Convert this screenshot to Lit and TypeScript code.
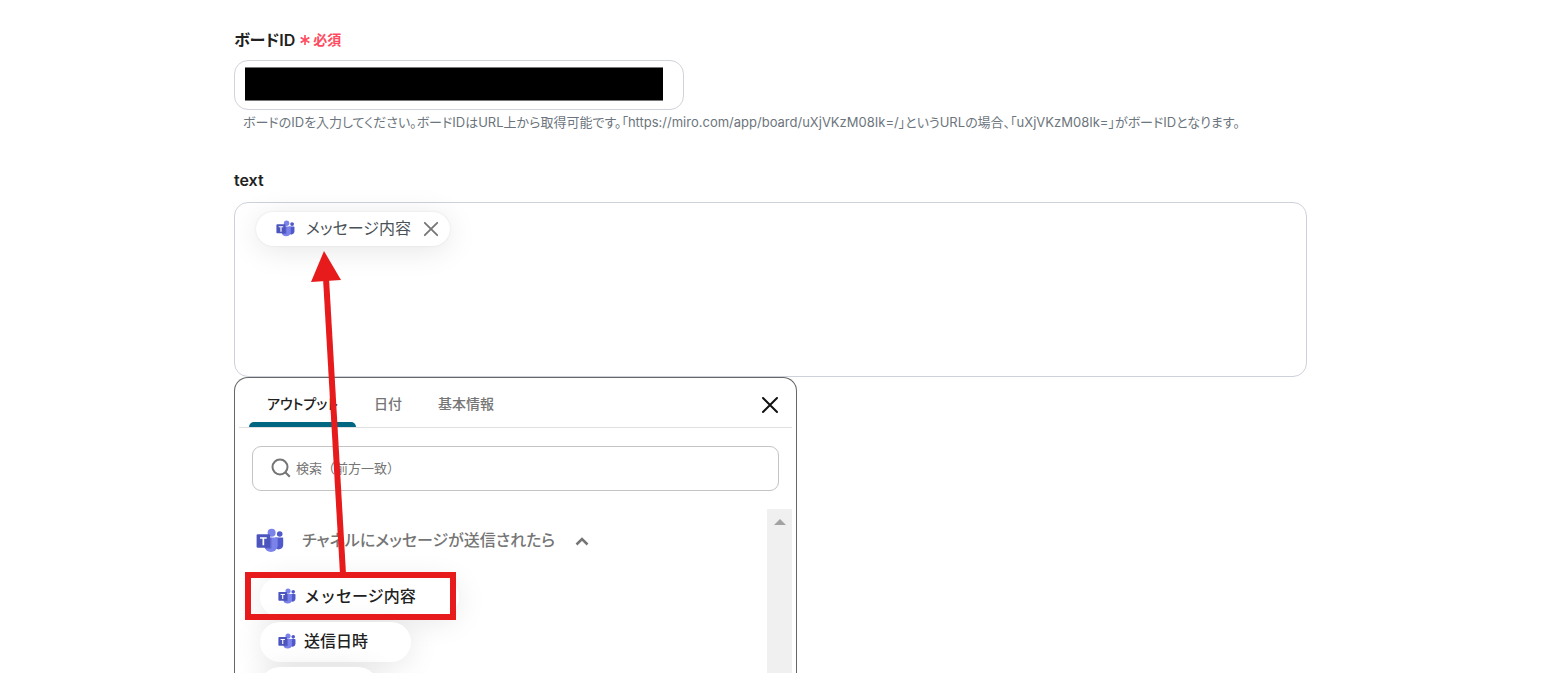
import { LitElement, html, css, svg } from "lit";
import { customElement, property, state } from "lit/decorators.js";
import { classMap } from "lit/directives/class-map.js";

@customElement("teams-icon")
class TeamsIcon extends LitElement {
  static styles = css`
    :host { display: block; flex: none; }
    .glyph { display: block; width: 100%; height: auto; }
  `;
  render() {
    return html`<svg class="glyph" viewBox="0 0 28 26" aria-hidden="true">
      <circle cx="23.7" cy="6" r="2.8" fill="#5059c9"></circle>
      <path d="M19 9.5h7.2c.6 0 1 .4 1 1v6.3a4.6 4.6 0 0 1-8.2 2.8z" fill="#5059c9"></path>
      <circle cx="15.6" cy="4.8" r="4" fill="#7b83eb"></circle>
      <path d="M8.500 9.500h12c.7 0 1.200.5 1.200 1.200v7.400a6.800 6.800 0 0 1-13.500 0z" fill="#7b83eb"></path>
      <path d="M10 9.500h5.500v10.300c0 .6-.4 1-1 1H9.300a8 8 0 0 1-.8-2.700z" fill="#4d55bd" opacity=".55"></path>
      <rect x=".6" y="6.200" width="13.500" height="13.500" rx="1.200" fill="#4c55bd"></rect>
      <path d="M4 9.300h6.700v1.500H8.200v6.400H6.500v-6.400H4z" fill="#fff"></path>
    </svg>`;
  }
}

const cross = (width: number) => svg`<path d="M2 2 16 16M16 2 2 16" fill="none" stroke="currentColor" stroke-width=${width} stroke-linecap="round"></path>`;

@customElement("output-picker")
class OutputPicker extends LitElement {
  @property({ type: Array }) outputs: string[] = [];
  @state() private tab = 0;
  @state() private open = true;
  private tabs = ["アウトプット", "日付", "基本情報"];

  static styles = css`
    * { box-sizing: border-box; }
    :host {
      display: flex; flex-direction: column; flex: 1; min-height: 0;
      max-width: 563px; padding: 0 4px; background: #fff;
      border: 1px solid #666; border-bottom: 0; border-radius: 14px 14px 0 0;
    }
    button { font: inherit; color: inherit; background: none; border: 0; padding: 0; cursor: pointer; }
    .head { display: flex; justify-content: space-between; align-items: stretch; height: 50px; padding: 0 11px 0 10px; border-bottom: 1px solid #e0e0e0; flex: none; }
    .tabs { display: flex; }
    .tab { display: flex; flex-direction: column; padding: 16px 18px 0; font-size: 14px; line-height: 20px; font-weight: 500; color: #757575; border-bottom: 5px solid transparent; }
    .tab.active { color: #212121; position: relative; font-feature-settings: "palt"; }
    .tab.active::after { content: ""; position: absolute; left: 0; right: 0; bottom: -5px; height: 5px; background: #006782; border-radius: 5px 5px 0 0; }
    .close { width: 20px; color: #111; }
    .close svg { width: 18px; height: 18px; display: block; margin-top: 4px; }
    .search { display: flex; align-items: center; gap: 5px; height: 45px; margin: 18px 13px; padding: 0 18px 2px; border: 1px solid #c4c4c4; border-radius: 9px; color: #757575; flex: none; }
    .search svg { width: 20px; height: 20px; flex: none; }
    .search input { flex: 1; min-width: 0; border: 0; outline: 0; padding: 0; font: inherit; font-size: 13px; color: #333; background: none; }
    .search input::placeholder { color: #757575; opacity: 1; }
    .body { display: flex; flex: 1; min-height: 0; }
    .list { flex: 1; min-width: 0; overflow: hidden; padding: 20px 0 0 17px; }
    .group { display: flex; align-items: center; height: 24px; font-size: 16px; font-weight: 500; color: #757575; font-feature-settings: "palt"; }
    .group teams-icon { width: 28px; margin-right: 18px; }
    .group svg { width: 14px; height: 10px; margin-left: 20px; }
    .name { padding-bottom: 4px; white-space: nowrap; }
    .chips { display: flex; flex-direction: column; align-items: flex-start; gap: 5px; list-style: none; margin: 0; padding: 24px 0 0 4px; }
    .chip { display: flex; align-items: center; gap: 8px; height: 40px; padding: 0 43px 2px 18px; border-radius: 20px; background: #fff; box-shadow: 0 4px 30px rgba(0, 0, 0, 0.1); font-size: 16px; line-height: 20px; font-weight: 500; color: #212121; }
    .chip .name { padding-bottom: 0; }
    .chip teams-icon { width: 18px; }
    .rail { width: 25px; background: #f0f0f0; display: flex; justify-content: center; }
    .rail svg { width: 12px; height: 6px; margin-top: 10px; }
  `;

  render() {
    return html`
      <div class="head">
        <div class="tabs" role="tablist">
          ${this.tabs.map((t, i) => html`<button role="tab" aria-selected=${i === this.tab}
            class=${classMap({ tab: true, active: i === this.tab })} @click=${() => (this.tab = i)}>${t}</button>`)}
        </div>
        <button class="close" aria-label="閉じる"><svg viewBox="0 0 18 18">${cross(2)}</svg></button>
      </div>
      <label class="search">
        <svg viewBox="0 0 20 20" fill="none" stroke="currentColor" stroke-width="2"><circle cx="9" cy="9" r="7.500"></circle><path d="m14.300 14.300 4.500 4.500"></path></svg>
        <input type="text" aria-label="検索" placeholder="検索（前方一致）" />
      </label>
      <div class="body">
        <div class="list">
          <button class="group" aria-expanded=${this.open} @click=${() => (this.open = !this.open)}>
            <teams-icon></teams-icon><span class="name">チャネルにメッセージが送信されたら</span>
            <svg viewBox="0 0 14 10" fill="none" stroke="currentColor" stroke-width="2.500"><path d="m1.500 8.500 5.500-5.500 5.500 5.500"></path></svg>
          </button>
          ${this.open ? html`<ul class="chips">
            ${this.outputs.map((o) => html`<li><button class="chip"><teams-icon></teams-icon><span class="name">${o}</span></button></li>`)}
          </ul>` : ""}
        </div>
        <div class="rail" aria-hidden="true"><svg viewBox="0 0 12 6"><path d="M0 6 6 0l6 6z" fill="#a3a3a3"></path></svg></div>
      </div>
    `;
  }
}

@customElement("app-root")
class AppRoot extends LitElement {
  static styles = css`
    * { box-sizing: border-box; }
    :host {
      display: flex; flex-direction: column; position: relative;
      height: 100vh; overflow: hidden; padding: 28px 245px 0 234px; box-sizing: border-box;
      background: #fff; color: #212121; font-family: Inter, "Noto Sans CJK JP", sans-serif;
    }
    .label { display: flex; align-items: center; gap: 5px; height: 24px; padding-bottom: 3px; font-size: 16px; font-weight: 600; font-feature-settings: "palt"; }
    .required { display: flex; align-items: center; gap: 3px; font-size: 14px; color: #ff4b5f; }
    .required svg { width: 10px; height: 10px; margin-top: 3px; }
    .field { position: relative; max-width: 450px; height: 50px; margin-top: 8px; }
    .field input { width: 100%; height: 100%; border: 1px solid #d0d3da; border-radius: 14px; padding: 0 10px; font: inherit; outline: 0; background: #fff; }
    .mask { position: absolute; left: 11px; right: 21px; top: 7px; bottom: 9px; background: #000; border: solid #777; border-width: 1px 0; }
    .hint { margin: 1px 0 0; padding-left: 9px; font-size: 13px; line-height: 22px; color: #6c757d; font-feature-settings: "palt"; white-space: nowrap; }
    .second { margin-top: 36px; }
    .editor { height: 175px; margin-top: 9px; padding: 9px 21px; border: 1px solid #cdd1d9; border-radius: 14px; flex: none; outline: 0; }
    .token { display: inline-flex; align-items: center; height: 34px; padding: 0 11px 0 20px; border-radius: 17px; background: #fff; box-shadow: 0 4px 30px rgba(0, 0, 0, 0.1), 0 0 2px rgba(0, 0, 0, 0.1); font-size: 16px; color: #495057; font-feature-settings: "palt"; }
    .token teams-icon { width: 19px; margin-right: 11px; }
    .name { padding-bottom: 4px; }
    .remove { border: 0; background: none; padding: 0; margin-left: 12px; color: #757575; cursor: pointer; }
    .remove svg { display: block; width: 16px; height: 16px; }
    .marks { position: absolute; left: 0; top: 0; width: 800px; height: 673px; pointer-events: none; }
  `;

  render() {
    return html`
      <label class="label" for="board">ボードID
        <span class="required"><svg viewBox="0 0 11 11" stroke="currentColor" stroke-width="1.800"><path d="M5.500 0v11M.7 2.800l9.600 5.400M.7 8.200l9.600-5.400"></path></svg>必須</span>
      </label>
      <div class="field"><input id="board" type="text" /><span class="mask"></span></div>
      <p class="hint">ボードのIDを入力してください。ボードIDはURL上から取得可能です。「https://miro.com/app/board/uXjVKzM08Ik=/」というURLの場合、「uXjVKzM08Ik=」がボードIDとなります。</p>
      <div class="label second" id="text-label">text</div>
      <div class="editor" role="textbox" aria-multiline="true" aria-labelledby="text-label" tabindex="0">
        <span class="token"><teams-icon></teams-icon><span class="name">メッセージ内容</span><button class="remove" aria-label="削除"><svg viewBox="0 0 18 18">${cross(2)}</svg></button></span>
      </div>
      <output-picker .outputs=${["メッセージ内容", "送信日時", "URL"]}></output-picker>
      <svg class="marks" viewBox="0 0 800 673" aria-hidden="true">
        <path d="M326 278 343 574" stroke="#e71b1b" stroke-width="6"></path>
        <path d="M324 251 341 280 311 282z" fill="#e71b1b"></path>
        <rect x="248" y="575" width="205" height="42" fill="none" stroke="#e71b1b" stroke-width="6"></rect>
      </svg>
    `;
  }
}
